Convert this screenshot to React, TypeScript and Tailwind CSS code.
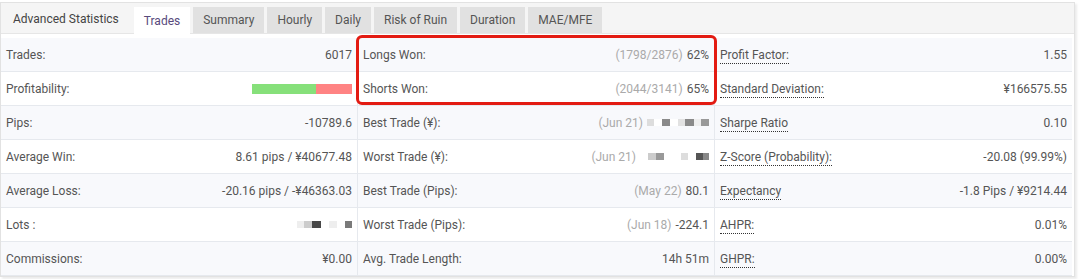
import React from 'react'

type Cell = {
  label: string;
  value?: React.ReactNode;
  note?: string;
  dotted?: boolean;
};

const tabs = ['Trades', 'Summary', 'Hourly', 'Daily', 'Risk of Ruin', 'Duration', 'MAE/MFE'];

// blurred values in the original, drawn as little grey squares
const Pixels = ({ blocks }: { blocks: [number, string][] }) => (
  <span className="flex items-center h-[7px]">
    {blocks.map(([w, c], i) => (
      <span key={i} className="h-[7px] inline-block" style={{ width: w, background: c }} />
    ))}
  </span>
);

const ProfitBar = () => (
  <span className="flex h-[10px] w-[100px]">
    <span className="h-full w-[64px] bg-[#86e07a]" />
    <span className="h-full w-[36px] bg-[#ff8383]" />
  </span>
);

const col1: Cell[] = [
  { label: 'Trades:', value: '6017' },
  { label: 'Profitability:', value: <ProfitBar /> },
  { label: 'Pips:', value: '-10789.6' },
  { label: 'Average Win:', value: '8.61 pips / ¥40677.48' },
  { label: 'Average Loss:', value: '-20.16 pips / -¥46363.03' },
  {
    label: 'Lots :',
    value: (
      <Pixels
        blocks={[
          [7, '#eeeeee'],
          [8, '#cccccc'],
          [9, '#474747'],
          [8, '#ffffff'],
          [8, '#eeeeee'],
          [8, '#ffffff'],
          [7, '#7a7a7a'],
        ]}
      />
    ),
  },
  { label: 'Commissions:', value: '¥0.00' },
];

const col2: Cell[] = [
  { label: 'Longs Won:', note: '(1798/2876)', value: '62%' },
  { label: 'Shorts Won:', note: '(2044/3141)', value: '65%' },
  {
    label: 'Best Trade (¥):',
    note: '(Jun 21)',
    value: (
      <Pixels
        blocks={[
          [7, '#dddddd'],
          [8, '#ffffff'],
          [8, '#8a8a8a'],
          [8, '#ffffff'],
          [7, '#e2e2e2'],
          [9, '#8a8a8a'],
          [7, '#eeeeee'],
          [8, '#999999'],
        ]}
      />
    ),
  },
  {
    label: 'Worst Trade (¥):',
    note: '(Jun 21)',
    value: (
      <span className="pl-[8px]">
        <Pixels
          blocks={[
            [8, '#cccccc'],
            [8, '#999999'],
            [17, '#ffffff'],
            [7, '#dddddd'],
            [8, '#ffffff'],
            [7, '#555555'],
            [6, '#888888'],
          ]}
        />
      </span>
    ),
  },
  { label: 'Best Trade (Pips):', note: '(May 22)', value: '80.1' },
  { label: 'Worst Trade (Pips):', note: '(Jun 18)', value: '-224.1' },
  { label: 'Avg. Trade Length:', value: '14h 51m' },
];

const col3: Cell[] = [
  { label: 'Profit Factor:', value: '1.55', dotted: true },
  { label: 'Standard Deviation:', value: '¥166575.55', dotted: true },
  { label: 'Sharpe Ratio', value: '0.10', dotted: true },
  { label: 'Z-Score (Probability):', value: '-20.08 (99.99%)', dotted: true },
  { label: 'Expectancy', value: '-1.8 Pips / ¥9214.44', dotted: true },
  { label: 'AHPR:', value: '0.01%', dotted: true },
  { label: 'GHPR:', value: '0.00%', dotted: true },
];

const Column = ({ cells, last }: { cells: Cell[]; last?: boolean }) => (
  <div className={last ? '' : 'border-r border-[#e6e9ee]'}>
    {cells.map((c, i) => (
      <div
        key={c.label}
        className={`flex items-center justify-between h-[34px] px-[5px] border-b border-[#e6e9ee] ${
          i % 2 === 0 ? 'bg-[#f8f9fc]' : 'bg-white'
        }`}
      >
        <span className="text-[#555]">
          {c.dotted ? (
            <span className="border-b border-dotted border-[#333] pb-[1px]">{c.label}</span>
          ) : (
            c.label
          )}
        </span>
        <span className="flex items-center text-[#555]">
          {c.note && <span className="text-[#aaa] mr-[4px]">{c.note}</span>}
          {c.value}
        </span>
      </div>
    ))}
  </div>
);

export default function App() {
  return (
    <div className="relative w-[1079px] h-[279px] bg-white pt-[2px] text-[12px] font-['Roboto',sans-serif]">
      <div className="w-[1075px] border border-[#e2e2e2] shadow-[2px_2px_2px_rgba(0,0,0,0.08)]">
        {/* Tab header */}
        <div className="flex items-end h-[31px] bg-[#f5f5f5] border-b border-[#e6e6e6]">
          <span className="self-center pt-[2px] px-[12px] text-[#444]">Advanced Statistics</span>
          <div className="flex gap-[3px] ml-[3px]">
            {tabs.map((t, i) => (
              <span
                key={t}
                className={`h-[26px] flex items-center px-[10px] -mb-px ${
                  i === 0 ? 'bg-white text-[#584a7c] h-[27px]' : 'bg-[#e1e1e1] text-[#555]'
                }`}
              >
                {t}
              </span>
            ))}
          </div>
        </div>

        {/* Stats grid */}
        <div className="grid grid-cols-3 pt-[4px] pr-[2px] bg-white">
          <Column cells={col1} />
          <Column cells={col2} />
          <Column cells={col3} last />
        </div>
      </div>

      {/* Highlight box */}
      <div className="absolute left-[356px] top-[35px] w-[361px] h-[70px] border-[3px] border-[#e31b12] rounded-[6px]" />
    </div>
  );
}
